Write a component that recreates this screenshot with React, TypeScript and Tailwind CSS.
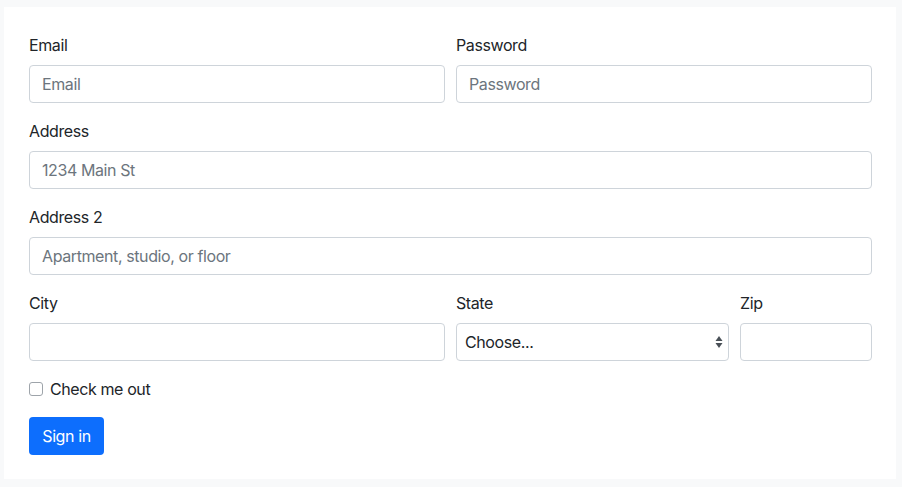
import React from 'react';

const inputCls =
  'block w-full h-[38px] rounded-[4px] border border-[#ced4da] bg-white px-3 text-base text-[#212529] placeholder:text-[#6c757d] outline-none';

const Field = ({ label, placeholder, className = '' }: { label: string; placeholder?: string; className?: string }) => (
  <div className={className}>
    <label className="block mb-2 leading-6 text-[#212529]">{label}</label>
    <input className={inputCls} placeholder={placeholder} />
  </div>
);

const App = () => {
  return (
    <div className="min-h-[487px] bg-[#f8f9fa] pt-[7px] pb-[8px] pl-[4px] pr-[6px] font-['Inter','Liberation_Sans',sans-serif] text-base tracking-[-0.4px]">
      <form className="bg-white pt-[26px] pb-[24px] pl-[25px] pr-[24px] flex flex-col gap-4">
        <div className="flex gap-[11px]">
          <Field label="Email" placeholder="Email" className="flex-1" />
          <Field label="Password" placeholder="Password" className="flex-1" />
        </div>
        <Field label="Address" placeholder="1234 Main St" />
        <Field label="Address 2" placeholder="Apartment, studio, or floor" />
        <div className="flex gap-[11px]">
          <Field label="City" className="w-[416px]" />
          <div className="w-[273px]">
            <label className="block mb-2 leading-6 text-[#212529]">State</label>
            <div className="relative h-[38px] rounded-[4px] border border-[#ced4da] bg-white flex items-center pl-2 text-[#212529]">
              <span>Choose...</span>
              <svg className="absolute right-[5px] top-1/2 -translate-y-1/2" width="8" height="14" viewBox="0 0 8 14">
                <path d="M4 1 L7.5 6 L0.5 6 Z" fill="#495057" />
                <path d="M4 13 L7.5 8 L0.5 8 Z" fill="#495057" />
              </svg>
            </div>
          </div>
          <Field label="Zip" className="flex-1" />
        </div>
        <label className="flex items-center gap-[7px] leading-6 text-[#212529]">
          <span className="w-[14px] h-[14px] rounded-[3px] border border-[#9ea4aa] bg-white" />
          Check me out
        </label>
        <div>
          <button
            type="button"
            className="h-[38px] w-[75px] rounded-[4px] bg-[#0d6efd] text-white leading-6"
          >
            Sign in
          </button>
        </div>
      </form>
    </div>
  );
};

export default App;
